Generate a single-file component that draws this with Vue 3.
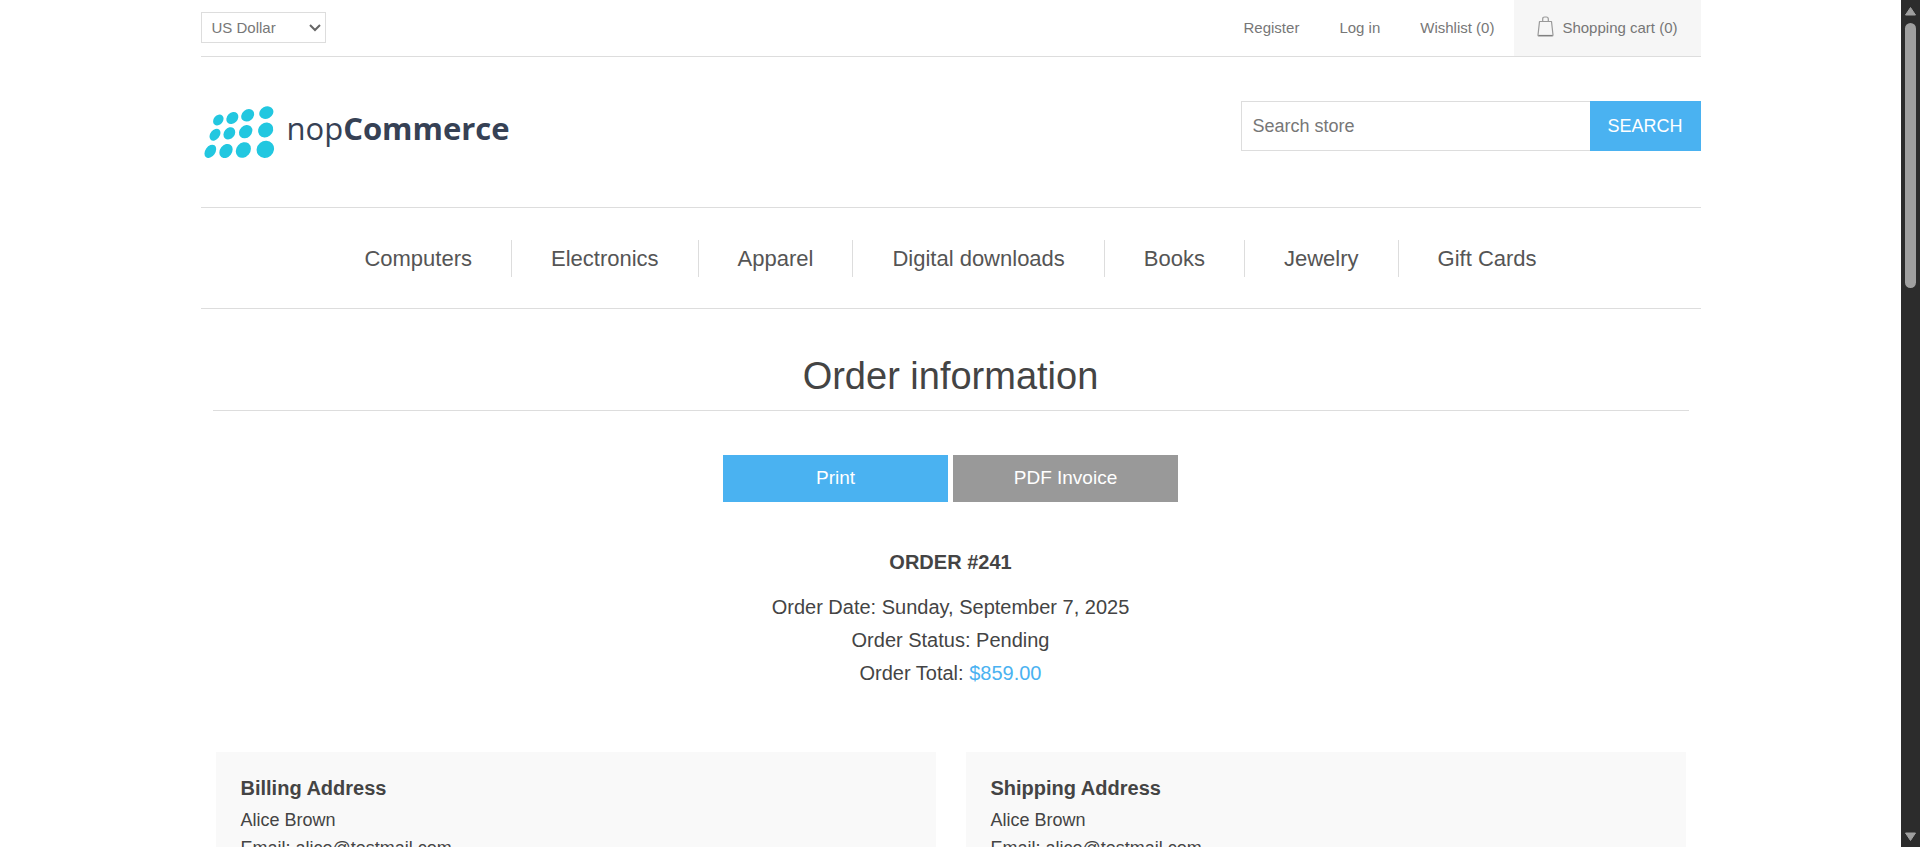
<script setup>
import { ref } from 'vue'

const currency = ref('US Dollar')
const search = ref('')
const accountLinks = ['Register', 'Log in', 'Wishlist (0)']
const categories = ['Computers', 'Electronics', 'Apparel', 'Digital downloads', 'Books', 'Jewelry', 'Gift Cards']
const addresses = [
  { title: 'Billing Address', name: 'Alice Brown', email: 'alice@testmail.com' },
  { title: 'Shipping Address', name: 'Alice Brown', email: 'alice@testmail.com' },
]
const dots = [
  [85, 360, 14, 18, 40], [127, 354, 16, 20, 45], [173, 346, 17, 21, 50], [229, 338, 18, 22, 62],
  [75, 404, 14, 20, 38], [118, 400, 16, 20, 40], [167, 395, 18, 22, 45], [227, 390, 21, 24, 52],
  [61, 454, 15, 22, 35], [108, 453, 18, 23, 38], [160, 450, 21, 25, 40], [226, 448, 25, 27, 50],
]
</script>

<template>
  <div class="window">
    <div class="page">
      <div class="container">
        <header>
          <div class="topbar">
            <div class="currency">
              <select v-model="currency" aria-label="Currency">
                <option>US Dollar</option>
                <option>Euro</option>
              </select>
              <svg class="chevron" viewBox="0 0 12 8" aria-hidden="true">
                <path d="M1 1l5 5 5-5" fill="none" stroke="#666" stroke-width="2" />
              </svg>
            </div>
            <nav class="account" aria-label="Account">
              <a v-for="link in accountLinks" :key="link" href="#">{{ link }}</a>
              <a href="#" class="cart">
                <svg class="bag" viewBox="0 0 17 21" aria-hidden="true">
                  <path d="M2.500 5.500h12l1.500 13.500q0 1-1 1h-13q-1 0-1-1z" fill="none" stroke="#999" stroke-width="1.200" stroke-linejoin="round" />
                  <path d="M5.700 5.500V3q0-2 2-2h1.600q2 0 2 2v2.500" fill="none" stroke="#999" stroke-width="1.200" />
                  <path d="M1.500 19.500h14" stroke="#808080" stroke-width="1.200" />
                </svg>
                <span>Shopping cart (0)</span>
              </a>
            </nav>
          </div>
          <div class="brandbar">
            <a href="#" class="logo" aria-label="nopCommerce">
              <svg class="mark" viewBox="33 318 228 156" aria-hidden="true">
                <ellipse
                  v-for="(d, i) in dots" :key="i" :cx="d[0]" :cy="d[1]" :rx="d[2]" :ry="d[3]"
                  :transform="`rotate(${d[4]} ${d[0]} ${d[1]})`" fill="#22c7e0"
                />
              </svg>
              <span class="wordmark">nop<b>Commerce</b></span>
            </a>
            <form class="search" @submit.prevent>
              <input v-model="search" type="text" placeholder="Search store" aria-label="Search store" />
              <button type="submit">SEARCH</button>
            </form>
          </div>
        </header>
        <nav class="menu" aria-label="Categories">
          <a v-for="c in categories" :key="c" href="#">{{ c }}</a>
        </nav>
        <main>
          <h1>Order information</h1>
          <div class="actions">
            <button type="button" class="print">Print</button>
            <button type="button" class="pdf">PDF Invoice</button>
          </div>
          <section class="overview">
            <h2>ORDER #241</h2>
            <p>Order Date: Sunday, September 7, 2025</p>
            <p>Order Status: Pending</p>
            <p>Order Total: <span class="total">$859.00</span></p>
          </section>
          <div class="addresses">
            <section v-for="a in addresses" :key="a.title" class="address">
              <h3>{{ a.title }}</h3>
              <p>{{ a.name }}</p>
              <p>Email: {{ a.email }}</p>
            </section>
          </div>
        </main>
      </div>
    </div>
    <div class="scrollbar" aria-hidden="true">
      <svg class="arrow" viewBox="0 0 13 10"><path d="M6.500 1.500L11.500 9H1.500z" /></svg>
      <div class="track"><div class="thumb"></div></div>
      <svg class="arrow" viewBox="0 0 13 10"><path d="M1.500 1H11.500L6.500 8.500z" /></svg>
    </div>
  </div>
</template>

<style>
body {
  margin: 0;
  background: #fff;
}
</style>

<style scoped>
* {
  box-sizing: border-box;
}
.window {
  display: flex;
  height: 100vh;
  overflow: hidden;
  font-family: "Liberation Sans", Arial, sans-serif;
  color: #444;
}
.page {
  flex: 1;
  min-width: 0;
  overflow: hidden;
}
.container {
  max-width: 1500px;
  margin: 0 auto;
}
a {
  color: inherit;
  text-decoration: none;
}
h1, h2, h3, p {
  margin: 0;
}
button, input, select {
  font-family: inherit;
  border-radius: 0;
}
.topbar {
  display: flex;
  justify-content: space-between;
  align-items: flex-start;
  border-bottom: 1px solid #ddd;
  font-size: 15px;
  color: #777;
}
.currency {
  display: grid;
  align-items: center;
  width: 125px;
  height: 31px;
  margin-top: 12px;
}
.currency select {
  grid-area: 1 / 1;
  height: 100%;
  padding: 0 24px 0 10px;
  border: 1px solid #ddd;
  background: #fff;
  color: #777;
  font-size: 15px;
  appearance: none;
}
.chevron {
  grid-area: 1 / 1;
  justify-self: end;
  width: 12px;
  height: 8px;
  margin-right: 5px;
  pointer-events: none;
}
.account {
  display: flex;
  gap: 40px;
  line-height: 56px;
}
.cart {
  display: flex;
  align-items: center;
  gap: 8px;
  margin-left: -20px;
  padding: 0 23px;
  background: #f6f6f6;
}
.bag {
  width: 17px;
  height: 21px;
  margin-bottom: 4px;
}
.brandbar {
  display: flex;
  justify-content: space-between;
  align-items: flex-start;
  padding: 44px 0 49px;
}
.logo {
  display: flex;
  align-items: center;
  gap: 10px;
  padding-top: 5px;
  color: #364155;
}
.mark {
  width: 76px;
  height: 52px;
}
.wordmark {
  font-family: "Open Sans", "Noto Sans", sans-serif;
  font-size: 31px;
  line-height: 44px;
  margin-bottom: 8px;
}
.search {
  display: flex;
  width: 460px;
}
.search input {
  flex: 1;
  min-width: 0;
  height: 50px;
  padding: 0 11px;
  border: 1px solid #ddd;
  border-right: 0;
  font-size: 18px;
  color: #777;
  outline: 0;
}
.search input::placeholder {
  color: #777;
  opacity: 1;
}
.search button {
  width: 111px;
  border: 0;
  background: #4ab2f1;
  color: #fff;
  font-size: 18px;
}
.menu {
  display: flex;
  justify-content: center;
  padding: 32px 0 31px;
  border-top: 1px solid #ddd;
  border-bottom: 1px solid #ddd;
  font-size: 22px;
  line-height: 37px;
  color: #555;
}
.menu a {
  padding: 0 39px;
}
.menu a + a {
  border-left: 1px solid #ddd;
}
main {
  padding: 37px 12px 0;
}
h1 {
  padding-bottom: 4px;
  border-bottom: 1px solid #ddd;
  font-size: 38px;
  font-weight: normal;
  line-height: 60px;
  text-align: center;
}
.actions {
  display: flex;
  justify-content: center;
  gap: 5px;
  margin-top: 44px;
}
.actions button {
  width: 225px;
  height: 47px;
  padding: 0 0 2px;
  border: 0;
  color: #fff;
  font-size: 19px;
}
.actions .print {
  background: #4ab2f1;
}
.actions .pdf {
  background: #999;
}
.overview {
  margin-top: 44px;
  font-size: 20px;
  line-height: 33px;
  text-align: center;
}
h2 {
  margin-bottom: 12px;
  font-size: 20px;
}
.total {
  color: #4ab2f1;
}
.addresses {
  display: grid;
  grid-template-columns: 1fr 1fr;
  gap: 30px;
  margin: 62px 3px 0;
}
.address {
  padding: 20px 25px 25px;
  background: #f9f9f9;
  font-size: 18px;
  line-height: 28px;
}
h3 {
  margin-bottom: 2px;
  font-size: 20px;
  line-height: 32px;
}
.scrollbar {
  display: flex;
  flex-direction: column;
  align-items: center;
  width: 19px;
  padding: 6px 0 5px;
  background: #2c2c2c;
}
.arrow {
  width: 13px;
  height: 10px;
  fill: #9f9f9f;
  stroke: #9f9f9f;
  stroke-width: 1px;
  stroke-linejoin: round;
}
.track {
  flex: 1;
  width: 11px;
  padding: 7px 0;
}
.thumb {
  height: 33%;
  border-radius: 6px;
  background: #9f9f9f;
}
</style>
